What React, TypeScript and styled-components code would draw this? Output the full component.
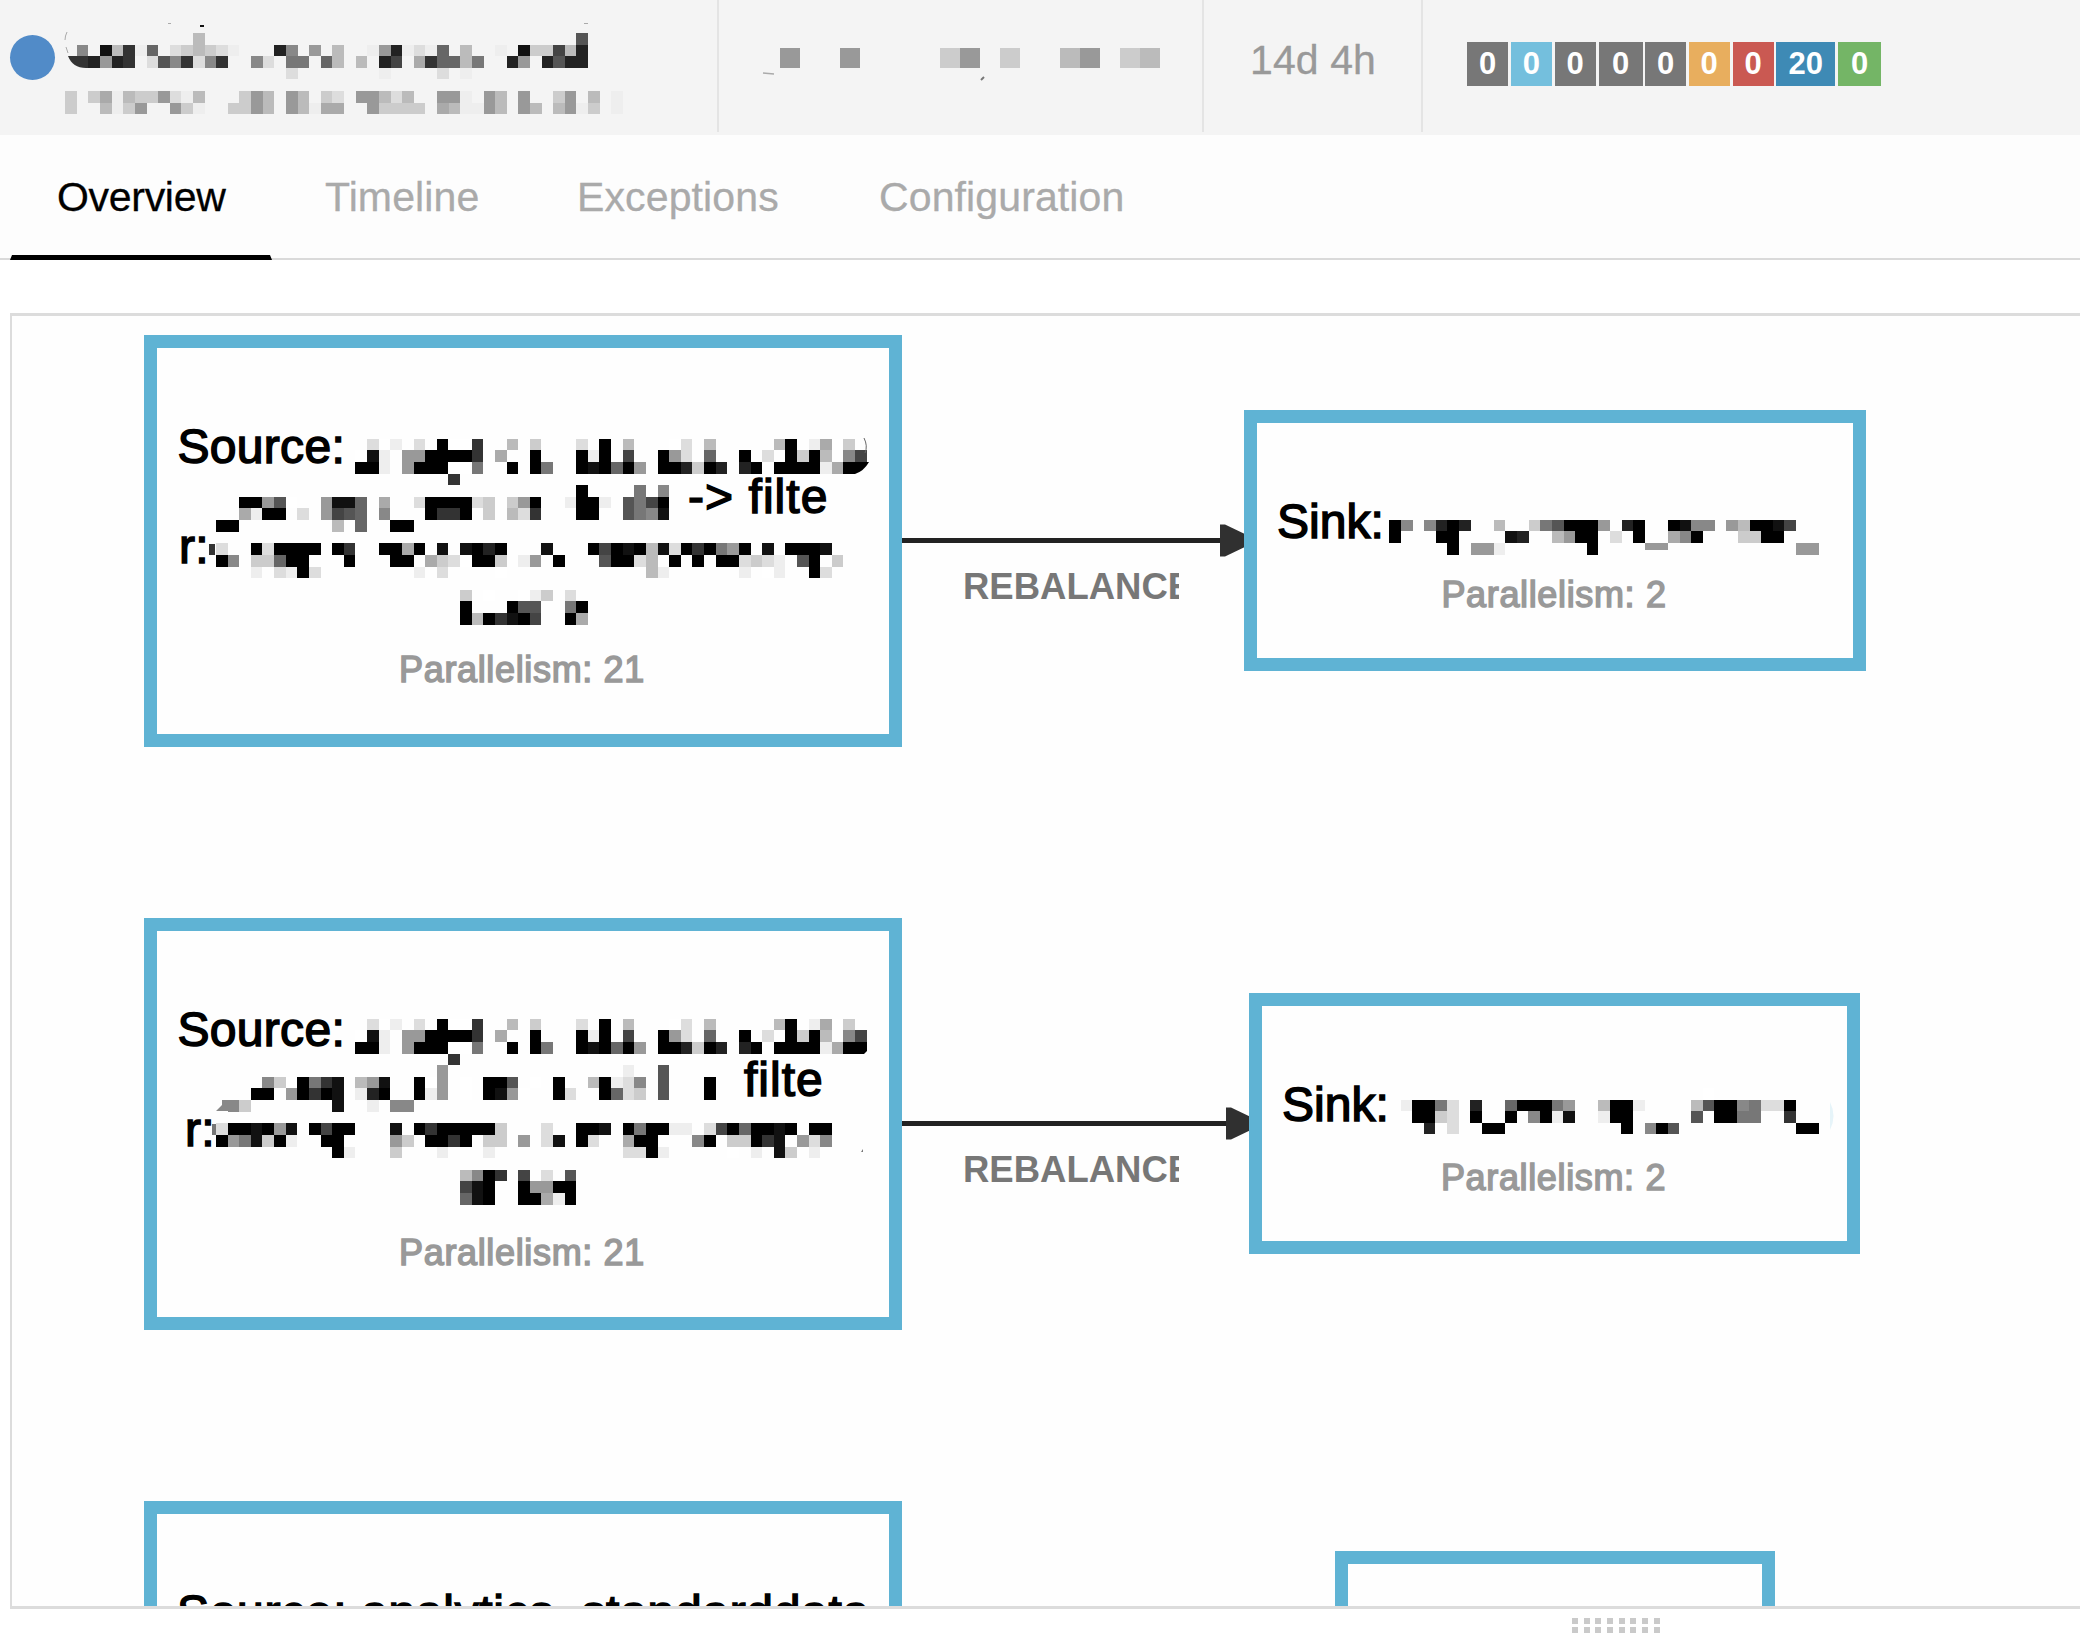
import React from "react";
import styled, { createGlobalStyle } from "styled-components";

const GlobalStyle = createGlobalStyle`
  *, *::before, *::after { box-sizing: border-box; }
  html, body { margin: 0; padding: 0; background: #fff; overflow: hidden; }
  body { font-family: "Liberation Sans", Arial, Helvetica, sans-serif; }
`;

const Page = styled.div`
  width: 2080px;
  height: 1638px;
  display: flex;
  flex-direction: column;
  overflow: hidden;
`;

/* ---------- job header ---------- */

const Header = styled.header`
  flex: none;
  display: flex;
  align-items: flex-start;
  height: 135px;
  background: #f4f4f4;
`;

const HeaderCell = styled.div<{ $width?: number; $pad: string }>`
  flex: ${(p) => (p.$width ? "none" : "1")};
  width: ${(p) => (p.$width ? `${p.$width}px` : "auto")};
  height: 132px;
  display: flex;
  align-items: flex-start;
  padding: ${(p) => p.$pad};
  border-right: ${(p) => (p.$width ? "2px solid #e4e4e4" : "none")};
`;

const StatusDot = styled.span`
  flex: none;
  width: 45px;
  height: 45px;
  margin: 35px 10px 0 0;
  border-radius: 50%;
  background: #518bc8;
`;

const Duration = styled.span`
  font-size: 41px;
  line-height: 50px;
  letter-spacing: 0.1px;
  color: #999;
  -webkit-text-stroke: 0.3px #999;
  white-space: nowrap;
`;

const Badges = styled.div`
  display: flex;
  gap: 2.85px;
`;

const Badge = styled.span<{ $color: string; $width: number }>`
  width: ${(p) => p.$width}px;
  height: 44px;
  background: ${(p) => p.$color};
  color: #fff;
  font-size: 31px;
  font-weight: 700;
  line-height: 43px;
  text-align: center;
`;

/* ---------- tabs ---------- */

const Tabs = styled.nav`
  flex: none;
  display: flex;
  gap: 6px;
  height: 125px;
  padding-left: 10px;
  background: #fdfdfd;
  box-shadow: inset 0 -2px 0 #dadada;
`;

const Tab = styled.a<{ $active?: boolean; $width: number }>`
  position: relative;
  width: ${(p) => p.$width}px;
  height: 125px;
  padding: 37px 0 0 47px;
  font-size: 41px;
  line-height: 50px;
  letter-spacing: ${(p) => (p.$active ? "-0.3px" : "0.12px")};
  white-space: nowrap;
  color: ${(p) => (p.$active ? "#000" : "#aaa")};
  -webkit-text-stroke: 0.3px currentColor;
  &::after {
    content: "";
    display: ${(p) => (p.$active ? "block" : "none")};
    position: absolute;
    left: 0;
    right: 0;
    bottom: 0;
    height: 5px;
    background: #000;
    clip-path: polygon(2px 0, calc(100% - 2px) 0, 100% 100%, 0 100%);
  }
`;

/* ---------- job graph ---------- */

const Panel = styled.main`
  flex: none;
  position: relative;
  height: 1296px;
  margin: 53px 0 0 10px;
  border: solid #dcdcdc;
  border-width: 3px 0 3px 2px;
  background: #fefefe;
  overflow: hidden;
`;

/* Shifts the free canvas so that node coordinates are page coordinates. */
const Canvas = styled.div`
  position: absolute;
  left: -12px;
  top: -316px;
  width: 2080px;
  height: 1700px;
`;

const NodeBox = styled.section<{ $x: number; $y: number; $w: number; $h: number }>`
  position: absolute;
  left: ${(p) => p.$x}px;
  top: ${(p) => p.$y}px;
  width: ${(p) => p.$w}px;
  height: ${(p) => p.$h}px;
  padding-top: 74px;
  border: 13px solid #5fb3d4;
  background: #fefefe;
  display: flex;
  flex-direction: column;
`;

const Line = styled.div<{ $indent: number; $spacing?: number }>`
  height: 50px;
  padding-left: ${(p) => p.$indent}px;
  font-size: 48px;
  line-height: 50px;
  letter-spacing: ${(p) => p.$spacing ?? 0.3}px;
  color: #000;
  -webkit-text-stroke: 1.5px #000;
  white-space: pre;
`;

const Parallelism = styled.div`
  margin: 26px 2px 0 0;
  font-size: 36px;
  line-height: 44px;
  letter-spacing: 0.65px;
  text-align: center;
  color: #999;
  -webkit-text-stroke: 1.5px #999;
`;

const EdgeLabel = styled.div<{ $y: number }>`
  position: absolute;
  left: 963px;
  top: ${(p) => p.$y}px;
  width: 216px;
  height: 44px;
  overflow: hidden;
  font-size: 36.5px;
  font-weight: 700;
  line-height: 44px;
  white-space: nowrap;
  color: #777;
`;

const Overlay = styled.svg<{ $x: number; $y: number }>`
  position: absolute;
  left: ${(p) => p.$x}px;
  top: ${(p) => p.$y}px;
  overflow: visible;
  pointer-events: none;
`;

const InlineDrawing = styled.svg`
  flex: none;
  overflow: visible;
`;

/* ---------- resize handle ---------- */

const HandleBar = styled.footer`
  flex: 1;
  display: flex;
  padding: 9px 0 0 1572px;
`;

const Handle = styled.div`
  display: grid;
  grid-template-columns: repeat(8, 6px);
  grid-auto-rows: 6px;
  column-gap: 5.7px;
  row-gap: 3px;
`;

const Grip = styled.i`
  background: #cacaca;
`;

/* ---------- pixelated text ---------- */

/* Each row lists runs as "column:greys", one hex digit of grey per cell. */
type Rows = string[];

const CELL = 11.62;

function Mosaic({ rows, x = 0, y = 0, cell = CELL }: { rows: Rows; x?: number; y?: number; cell?: number }) {
  const out: React.ReactElement[] = [];
  rows.forEach((row, r) => {
    row
      .split(" ")
      .filter(Boolean)
      .forEach((run) => {
        const [start, greys] = run.split(":");
        greys.split("").forEach((g, i) => {
          const c = Number(start) + i;
          const x0 = Math.round(x + c * cell);
          const x1 = Math.round(x + (c + 1) * cell);
          const y0 = Math.round(y + r * cell);
          const y1 = Math.round(y + (r + 1) * cell);
          out.push(<rect key={`${r}-${c}`} x={x0} y={y0} width={x1 - x0} height={y1 - y0} fill={`#${g}${g}${g}`} />);
        });
      });
  });
  return <g shapeRendering="crispEdges">{out}</g>;
}

const titleRows: Rows = [
  "11:b 44:5",
  "1:8 3:1b3e6 9:dcbcde 18:28 21:9 23:b 26:e92ede6 34:b 37:e 39:1cc4b2",
  "2:2923 7:d583d83 16:8d 19:77 22:6b 25:b 27:24 30:a366b7 38:29 41:2522",
  "19:d 27:e 32:d 34:e",
  "",
  "0:c 2:caebcc9deb 15:c9b 19:9b 22:cd 25:99bdb 32:99e 36:9b 39:9 42:c9 45:b 47:e",
  "0:c 3:bec9 9:9ce 14:cc9b 19:9beaa 26:9cccc 32:abee9b 39:9b 42:b9ec 47:e",
];

const sourceHead: Rows = [
  "13:dfe 17:d 19:0ff3 25:b 27:c 31:d 33:0 35:b 39:fd 42:b 48:b0 51:eaf 54:c",
  "12:f1e 16:9900003 24:a 27:0 31:0e0 35:4 38:09d 42:6 45:0 47:d 49:0c0b 54:84",
  "12:00e 16:9000ff7 25:0 27:07 31:010609 38:002c02 45:20 48:0000ea0",
  "20:3",
];

const source1: Rows = [
  ...sourceHead,
  "31:0 36:7 38:8",
  "2:0095f 9:9116 14:a 17:d0000dc 25:c90 30:e00e 35:5740",
  "2:ae00 7:d 9:9456 14:8 18:0330 23:c 25:bd3 31:00 35:5781",
  "0:00 10:b 12:6 15:00",
  "",
  "0:d 3:0d0000 10:03 14:00a0 19:1 21:1020 28:1 32:04010b1d030790 47:1 49:0001",
  "0:08 3:cc600 11:0 15:00 18:acdf00c 26:e9 29:0 33:500db 39:0 41:0 43:00dcde 50:50 53:c",
  "3:e 5:de0d 17:e 19:d 24:f 37:be 45:e 47:fe 51:0d",
  "",
  "21:c 23:f 26:fec 30:d",
  "21:0 25:055 30:70",
  "21:0b03104 30:0a",
];

const source2: Rows = [
  ...sourceHead,
  "19:9 35:e 38:5",
  "4:8cf0731 12:b91 17:0f9 21:f 23:005 27:f 29:0 32:b0ed8 38:5 42:0",
  "3:00 6:90301 12:e20 17:0e9 21:f 23:019f 29:0d 33:06dc 38:5 42:0",
  "1:8c 10:1 13:e 15:88",
  "",
  "0:d001091 8:0400 15:1 17:0300000c 28:d 31:001 35:0700ee 42:d4060010 51:00",
  "0:0971c0e 9:00 15:9c 18:0030 23:cc 26:9 28:d1 31:0d 35:a00 41:80 44:cc031 50:9d8",
  "10:0e 15:c 19:e 23:e 35:dd0e 44:f 46:e 48:1c 51:e",
  "",
  "21:b803 26:4 28:d 30:5",
  "21:410 26:09900",
  "21:610 26:00ae0",
];

const sink1: Rows = [
  "0:08 3:8202 9:b 12:c750009 20:20 24:0188 29:9b0014",
  "0:0 4:00 10:12 14:b900 19:d 21:0 24:a80 30:cc00",
  "5:0 7:99e 17:0 35:99",
];

const sink2: Rows = [
  "26:f",
  "0:e007d 6:2 9:600079 17:b00e 25:b50087dd0",
  "1:00cd 6:0 9:0 11:80e1 17:e00 25:5f0077 33:3",
  "2:2 4:d 7:00 19:0 21:805 34:00",
];

const dateRows: Rows = ["0:9 3:9 8:c9 11:c 14:b9 17:cb"];

/* ---------- page ---------- */

const badges: [string, number, string][] = [
  ["0", 41, "#777"],
  ["0", 41, "#74bfdd"],
  ["0", 41, "#777"],
  ["0", 44, "#777"],
  ["0", 40.5, "#777"],
  ["0", 41, "#e8ae5e"],
  ["0", 41, "#ca5952"],
  ["20", 58.5, "#3e8ab5"],
  ["0", 43.5, "#74b566"],
];

function Edge({ y, headX }: { y: number; headX: number }) {
  return (
    <Overlay $x={900} $y={y - 20} width={360} height={40}>
      <path d={`M1 20.5H${headX - 898}`} stroke="#222" strokeWidth="5" />
      <path d={`M${headX - 900} 4.5h5l24 11.5v9l-24 11.5h-5z`} fill="#303030" />
    </Overlay>
  );
}

export default function App() {
  return (
    <>
      <GlobalStyle />
      <Page>
        <Header>
          <HeaderCell $width={719} $pad="0 0 0 10px">
            <StatusDot />
            <InlineDrawing width={570} height={120}>
              <Mosaic rows={titleRows} y={33} x={0.2} />
              <path d="M3 56h20v12h-2c-9 0-15-4-18-12z" fill="#333" />
              <path d="M2 32q-2 4-2 8M1 47l2 6" stroke="#aaa" fill="none" />
              <path d="M135 25h4v2h-4z" fill="#111" />
              <path d="M103 23h3v1h-3zM519 23h4v1h-4z" fill="#aaa" />
            </InlineDrawing>
          </HeaderCell>
          <HeaderCell $width={485} $pad="0 0 0 61px">
            <InlineDrawing width={380} height={100}>
              <Mosaic rows={dateRows} y={48} cell={20} />
              <path d="M-17 73l11 1" stroke="#aaa" strokeWidth="1.5" />
              <path d="M204 77l-3 3" stroke="#777" strokeWidth="2" />
            </InlineDrawing>
          </HeaderCell>
          <HeaderCell $width={219} $pad="35px 0 0 46px">
            <Duration>14d 4h</Duration>
          </HeaderCell>
          <HeaderCell $pad="42px 0 0 44px">
            <Badges>
              {badges.map(([label, width, color], i) => (
                <Badge key={i} $color={color} $width={width}>
                  {label}
                </Badge>
              ))}
            </Badges>
          </HeaderCell>
        </Header>

        <Tabs>
          <Tab $active $width={262}>Overview</Tab>
          <Tab $width={246}>Timeline</Tab>
          <Tab $width={296}>Exceptions</Tab>
          <Tab $width={340}>Configuration</Tab>
        </Tabs>

        <Panel>
          <Canvas>
            <Edge y={540} headX={1220} />
            <Edge y={1123} headX={1226} />
            <EdgeLabel $y={565}>REBALANCE</EdgeLabel>
            <EdgeLabel $y={1148}>REBALANCE</EdgeLabel>

            <NodeBox $x={144} $y={335} $w={758} $h={412}>
              <Line $indent={20.5}>Source:</Line>
              <Line $indent={531} $spacing={1.05}>{"-> filte"}</Line>
              <Line $indent={22}>r:</Line>
              <Line $indent={0} />
              <Parallelism>Parallelism: 21</Parallelism>
            </NodeBox>
            <NodeBox $x={1244} $y={410} $w={622} $h={261}>
              <Line $indent={20} $spacing={0}>Sink:</Line>
              <Parallelism>Parallelism: 2</Parallelism>
            </NodeBox>

            <NodeBox $x={144} $y={918} $w={758} $h={412}>
              <Line $indent={20.5}>Source:</Line>
              <Line $indent={587} $spacing={1}>filte</Line>
              <Line $indent={28}>r:</Line>
              <Line $indent={0} />
              <Parallelism>Parallelism: 21</Parallelism>
            </NodeBox>
            <NodeBox $x={1249} $y={993} $w={611} $h={261}>
              <Line $indent={20} $spacing={0}>Sink:</Line>
              <Parallelism>Parallelism: 2</Parallelism>
            </NodeBox>

            <NodeBox $x={144} $y={1501} $w={758} $h={412}>
              <Line $indent={20} $spacing={0.68}>Source: analytics_standarddata</Line>
            </NodeBox>
            <NodeBox $x={1335} $y={1551} $w={440} $h={261} />

            <Overlay $x={216} $y={439} width={660} height={190}>
              <Mosaic rows={source1} y={-0.3} />
              <path d="M639 23h14q-5 9-14 12z" fill="#000" />
              <path d="M648-1q4 8 1 15" stroke="#666" fill="none" />
              <path d="M-7 105h6v11h-6z" fill="#333" />
            </Overlay>
            <Overlay $x={216} $y={1019} width={660} height={190}>
              <Mosaic rows={source2} y={-0.3} />
              <path d="M639 23h12v9l-3 3h-9z" fill="#000" />
              <path d="M0 92l6-6v-5h6v11z" fill="#888" />
              <path d="M-4 105h4v11h-4z" fill="#777" />
              <path d="M645 133l2-3v3z" fill="#777" />
            </Overlay>
            <Overlay $x={1389} $y={520} width={440} height={40}>
              <Mosaic rows={sink1} x={0.3} y={-0.3} />
              <path d="M256 23h23v7h-23z" fill="#999" />
            </Overlay>
            <Overlay $x={1400} $y={1088} width={430} height={50}>
              <Mosaic rows={sink2} x={0.5} />
              <path d="M430 14q7 14 0 28z" fill="#e6f4f9" />
            </Overlay>
          </Canvas>
        </Panel>

        <HandleBar>
          <Handle>
            {Array.from({ length: 16 }, (_, i) => (
              <Grip key={i} />
            ))}
          </Handle>
        </HandleBar>
      </Page>
    </>
  );
}
